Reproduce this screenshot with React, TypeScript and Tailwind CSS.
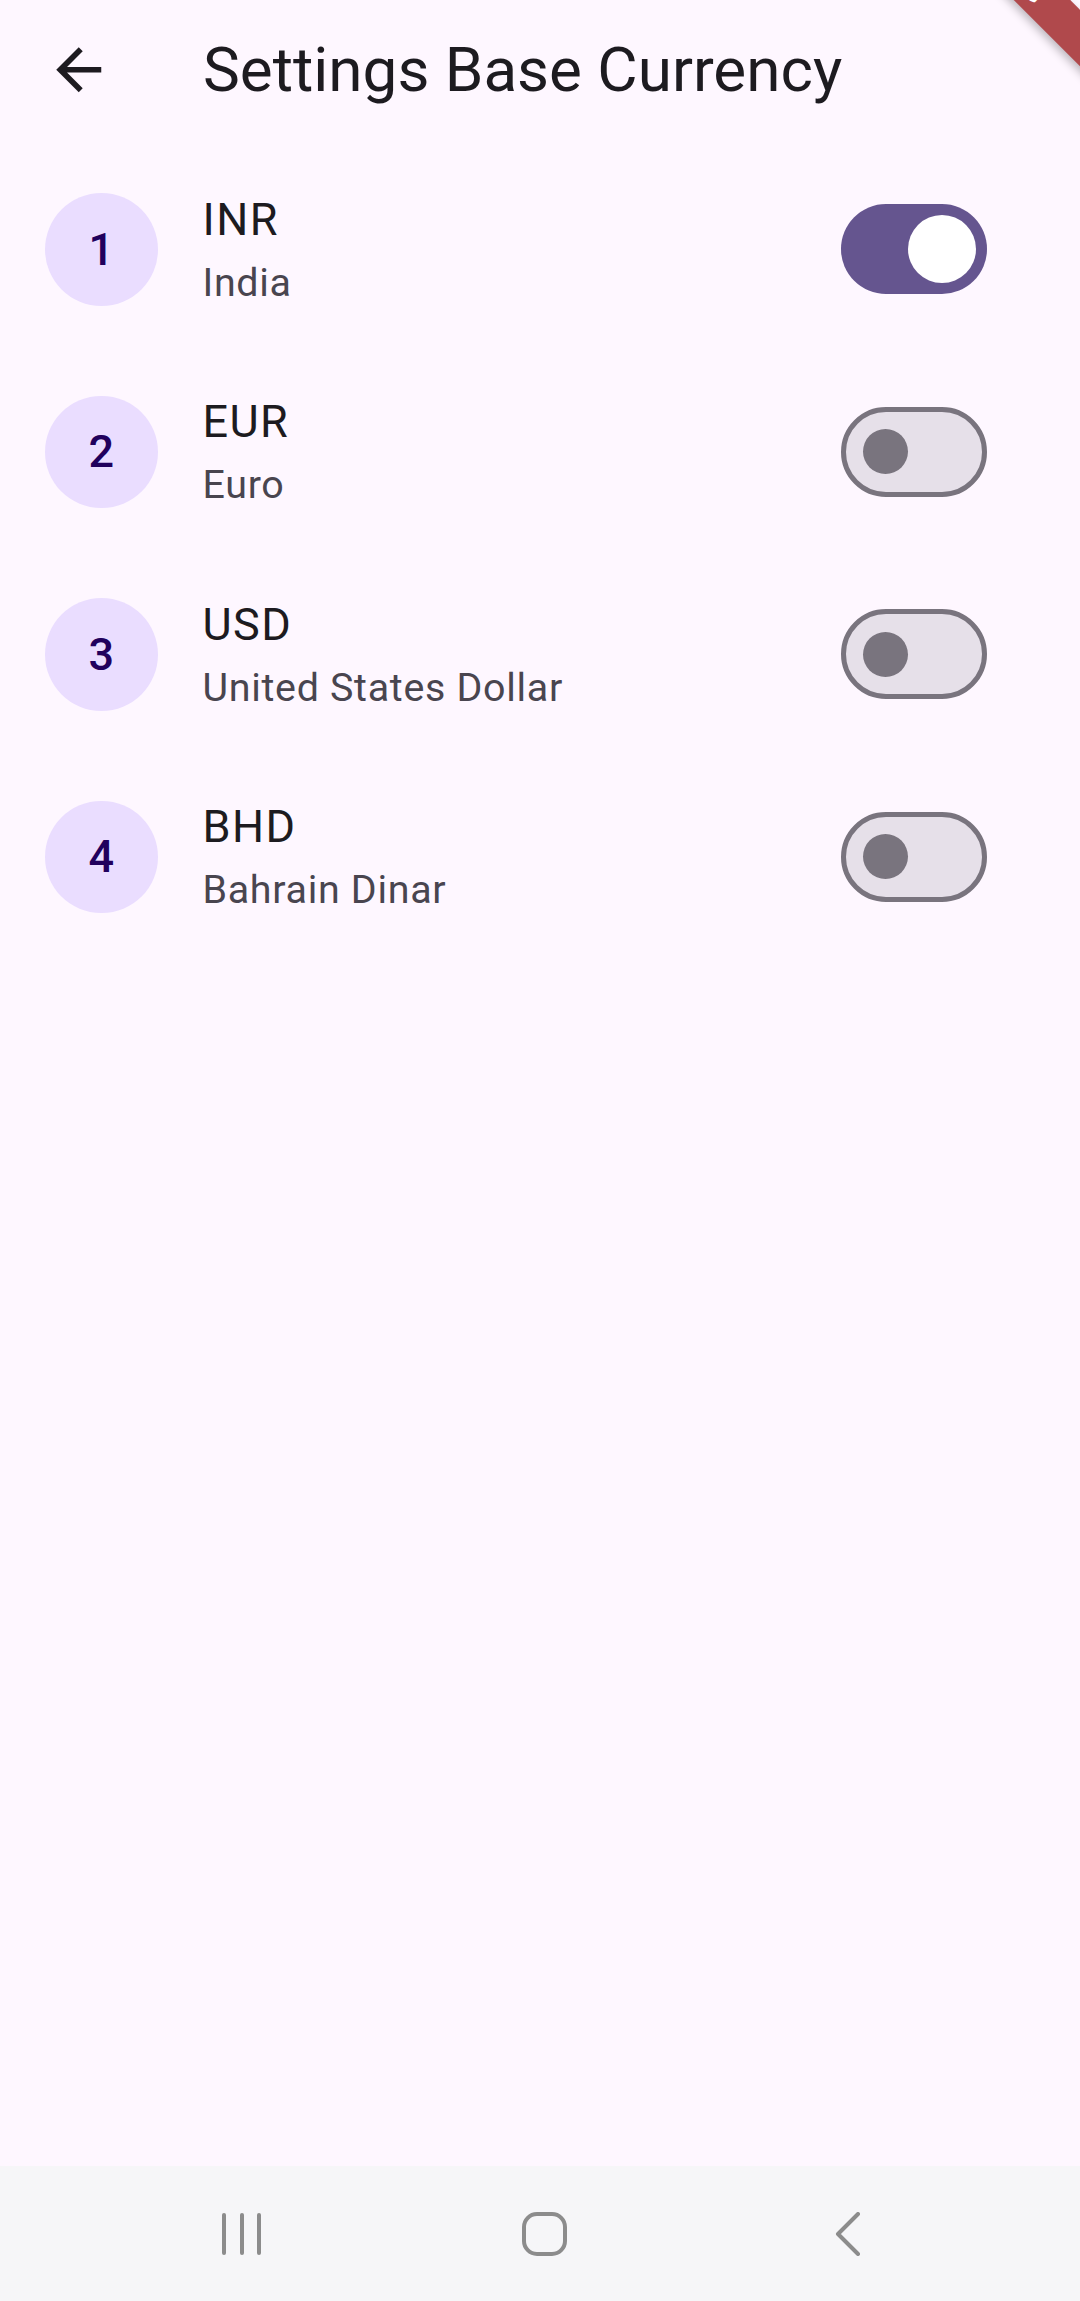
import { ArrowLeft } from "lucide-react";

type Currency = {
  index: number;
  code: string;
  name: string;
  enabled: boolean;
};

const currencies: Currency[] = [
  { index: 1, code: "INR", name: "India", enabled: true },
  { index: 2, code: "EUR", name: "Euro", enabled: false },
  { index: 3, code: "USD", name: "United States Dollar", enabled: false },
  { index: 4, code: "BHD", name: "Bahrain Dinar", enabled: false },
];

export default function App() {
  return (
    <div className="relative flex h-[2301px] w-[1080px] flex-col overflow-hidden bg-[#fef7ff] font-['Roboto',_sans-serif]">
      <header className="flex h-[140px] shrink-0 items-center">
        <div className="flex w-[158px] justify-center">
          <BackArrow />
        </div>
        <h1 className="ml-[45px] text-[62px] leading-[78px] text-[#1d1b20]">Settings Base Currency</h1>
      </header>

      <ul className="flex flex-col pt-[8px]">
        {currencies.map((c) => (
          <CurrencyRow key={c.code} currency={c} />
        ))}
      </ul>

      <NavBar />

      <DebugBanner />
    </div>
  );
}

function BackArrow() {
  return (
    <svg width="67.5" height="67.5" viewBox="0 0 24 24" fill="#1d1b20">
      <path d="M20 11H7.83l5.59-5.59L12 4l-8 8 8 8 1.41-1.41L7.83 13H20v-2z" />
    </svg>
  );
}

function CurrencyRow({ currency }: { currency: Currency }) {
  return (
    <li className="flex h-[202.5px] items-center pl-[45px] pr-[93px]">
      <div className="flex h-[112.5px] w-[112.5px] shrink-0 items-center justify-center rounded-full bg-[#eaddff] text-[45px] font-medium text-[#21005d]">
        {currency.index}
      </div>
      <div className="ml-[45px] flex flex-1 flex-col">
        <span className="text-[45px] leading-[64px] tracking-[1.4px] text-[#1d1b20]">{currency.code}</span>
        <span className="pt-[3px] text-[39.4px] leading-[56px] tracking-[0.7px] text-[#49454f]">{currency.name}</span>
      </div>
      <Toggle on={currency.enabled} />
    </li>
  );
}

function Toggle({ on }: { on: boolean }) {
  if (on) {
    return (
      <div className="flex h-[90px] w-[146px] shrink-0 items-center justify-end rounded-full bg-[#65558f] pr-[11px]">
        <div className="h-[68px] w-[68px] rounded-full bg-white" />
      </div>
    );
  }
  return (
    <div className="flex h-[90px] w-[146px] shrink-0 items-center rounded-full border-[5.6px] border-[#79747e] bg-[#e6e0e9] pl-[16.5px]">
      <div className="h-[45px] w-[45px] rounded-full bg-[#79747e]" />
    </div>
  );
}

function NavBar() {
  return (
    <nav className="mt-auto flex h-[135px] shrink-0 items-center bg-[#f6f6f8] pl-[221px]">
      <svg width="40" height="44" viewBox="0 0 40 44" stroke="#8c8c8c" strokeWidth="4" strokeLinecap="round">
        <line x1="3" y1="3" x2="3" y2="41" />
        <line x1="21" y1="3" x2="21" y2="41" />
        <line x1="38" y1="3" x2="38" y2="41" />
      </svg>
      <svg className="ml-[261px]" width="45" height="44" viewBox="0 0 45 44" fill="none" stroke="#8c8c8c" strokeWidth="4">
        <rect x="2" y="2" width="41" height="40" rx="13" />
      </svg>
      <svg className="ml-[268px]" width="26" height="44" viewBox="0 0 26 44" fill="none" stroke="#8c8c8c" strokeWidth="4" strokeLinecap="round" strokeLinejoin="round">
        <polyline points="23,2 3,22 23,42" />
      </svg>
    </nav>
  );
}

function DebugBanner() {
  return (
    <div className="pointer-events-none absolute left-[808px] top-[-54px] flex h-[40px] w-[400px] rotate-45 items-center justify-center bg-[#b0494c] shadow-[0_4px_8px_rgba(0,0,0,0.25)]">
      <span className="text-[28px] font-bold tracking-[1px] text-white">DEBUG</span>
    </div>
  );
}
